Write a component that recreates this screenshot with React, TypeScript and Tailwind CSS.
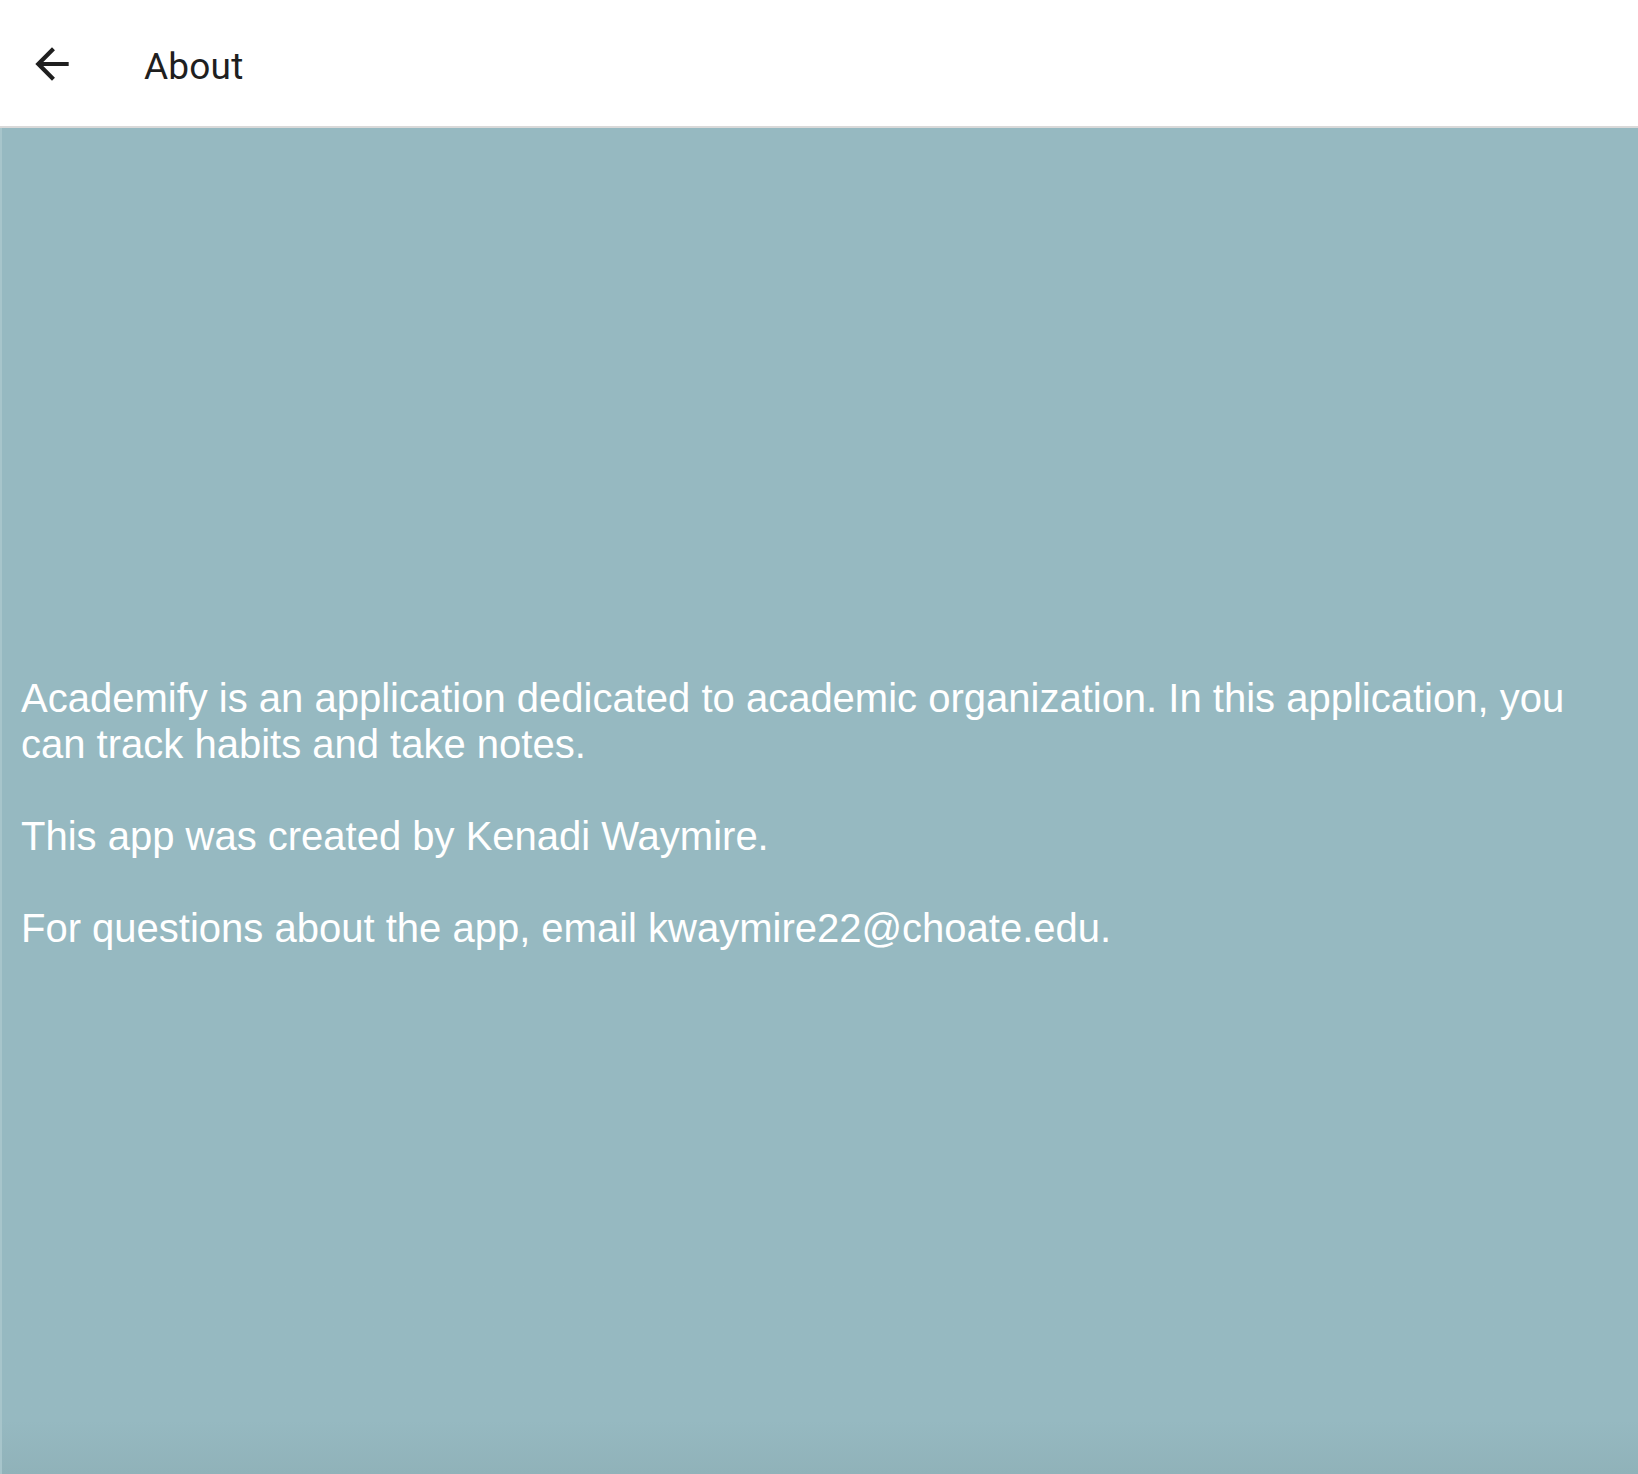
import React from 'react';

const BackArrow: React.FC = () => (
  <svg viewBox="0 0 24 24" className="w-[50px] h-[50px]" fill="#1f1f1f">
    <path d="M20 11H7.83l5.59-5.59L12 4l-8 8 8 8 1.41-1.41L7.83 13H20v-2z" />
  </svg>
);

export default function App() {
  return (
    <div className="min-h-screen flex flex-col bg-[#96b9c1]">
      {/* Top bar */}
      <header className="h-[128px] bg-white border-b-2 border-[#d9d9d9] flex items-center shrink-0">
        <button className="ml-[27px] mt-[2px] flex items-center">
          <BackArrow />
        </button>
        <h1 className="ml-[67px] mt-[8px] text-[37px] text-[#1f1f1f] font-['Roboto',sans-serif] tracking-[0.2px]">
          About
        </h1>
      </header>

      {/* Body */}
      <main className="flex-1 flex items-center border-l-2 border-[#a7c5cb] bg-gradient-to-b from-[#96b9c1] from-[96%] to-[#90b2b9]">
        <div className="px-[19px] pt-[24px] text-white text-[40px] leading-[46px] font-['Liberation_Sans',Arial,sans-serif]">
          <p>
            Academify is an application dedicated to academic organization. In this application, you can track habits and take notes.
          </p>
          <p className="mt-[46px]">This app was created by Kenadi Waymire.</p>
          <p className="mt-[46px]">For questions about the app, email kwaymire22@choate.edu.</p>
        </div>
      </main>
    </div>
  );
}
